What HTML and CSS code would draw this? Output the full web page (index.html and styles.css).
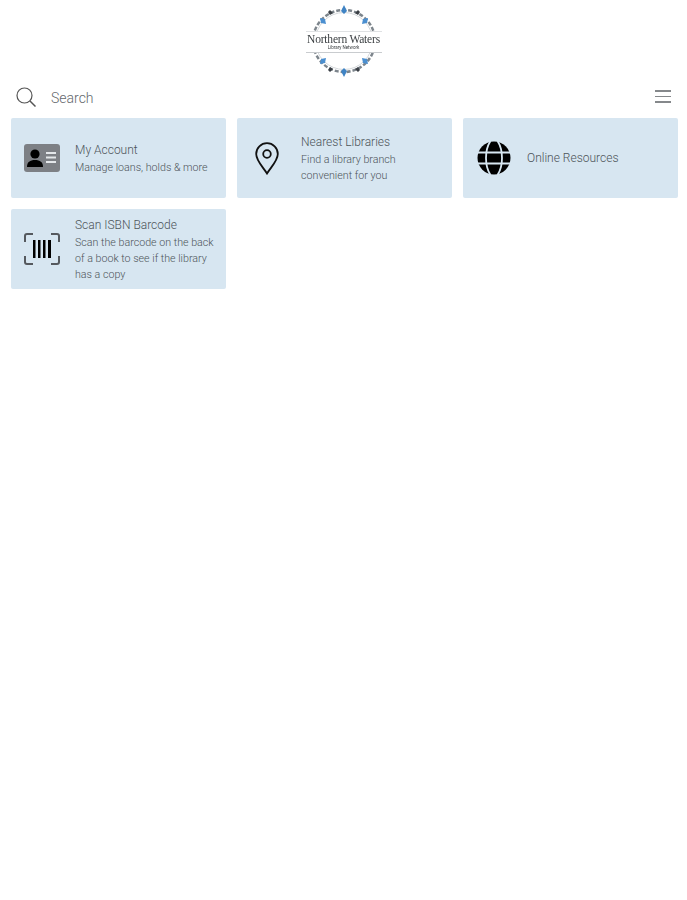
FILE: index.html
```html
<!DOCTYPE html>
<html lang="en">
<head>
    <meta charset="UTF-8">
    <meta name="viewport" content="width=device-width, initial-scale=1.0">
    <title>Northern Waters Library Network</title>
    <link rel="stylesheet" href="styles.css">
</head>
<body>
    <!-- Logo -->
    <header class="logo-bar">
        <div class="logo">
            <svg class="logo-ring" width="76" height="76" viewBox="0 0 76 76">
                <circle cx="38" cy="39" r="31" fill="none" stroke="#7d858c" stroke-width="2.500" stroke-dasharray="4 2"/>
                <circle cx="38" cy="39" r="28.500" fill="none" stroke="#d4d8db" stroke-width="1"/>
                <path d="M38 3l3 6-3 3-3-3zM38 75l3-6-3-3-3 3z" fill="#3f83c4"/>
                <path d="M14 16l5 1 1 5-5-1zM62 16l-5 1-1 5 5-1zM14 62l5-1 1-5-5 1zM62 62l-5-1-1-5 5 1z" fill="#4b8fd0"/>
                <path d="M24 8l3 3-3 2-2-3zM52 8l-3 3 3 2 2-3zM24 70l3-3-3-2-2 3zM52 70l-3-3 3-2 2 3z" fill="#3a3f45"/>
            </svg>
            <div class="logo-band">
                <div class="logo-name">Northern Waters</div>
                <div class="logo-sub">Library Network</div>
            </div>
        </div>
    </header>

    <!-- Search -->
    <div class="search-bar">
        <svg class="search-icon" width="20" height="20" viewBox="0 0 20 20">
            <circle cx="8.500" cy="8.500" r="7.500" fill="none" stroke="#555" stroke-width="1.200"/>
            <path d="M14 14l5.500 5.500" fill="none" stroke="#555" stroke-width="1.500"/>
        </svg>
        <span class="search-text">Search</span>
        <div class="menu-icon"><span></span><span></span><span></span></div>
    </div>

    <!-- Cards -->
    <main class="cards">
        <div class="card">
            <div class="card-icon">
                <svg width="36" height="28" viewBox="0 0 36 28">
                    <rect width="36" height="28" rx="3" fill="#7d8085"/>
                    <circle cx="11" cy="10" r="4.600" fill="#000"/>
                    <path d="M3 23c0-5 3-7 8-7s8 2 8 7z" fill="#000"/>
                    <path d="M22 8h10v2H22zM22 12.500h10v2H22zM22 17h10v2H22z" fill="#e4e7ea"/>
                </svg>
            </div>
            <div class="card-text">
                <div class="card-title">My Account</div>
                <div class="card-desc">Manage loans, holds &amp; more</div>
            </div>
        </div>

        <div class="card">
            <div class="card-icon card-icon-pin">
                <svg width="24" height="33" viewBox="0 0 24 33">
                    <path d="M12 31.500C7.500 24.500 1.200 18.500 1.200 12a10.800 10.800 0 0 1 21.600 0C22.800 18.500 16.500 24.500 12 31.500z" fill="none" stroke="#111" stroke-width="1.800"/>
                    <circle cx="12" cy="12" r="3.800" fill="none" stroke="#111" stroke-width="1.800"/>
                </svg>
            </div>
            <div class="card-text">
                <div class="card-title">Nearest Libraries</div>
                <div class="card-desc">Find a library branch convenient for you</div>
            </div>
        </div>

        <div class="card">
            <div class="card-icon">
                <svg width="34" height="34" viewBox="0 0 34 34">
                    <circle cx="17" cy="17" r="16.500" fill="#000"/>
                    <path d="M0 11.500h34M0 22.500h34" stroke="#d7e6f1" stroke-width="1.800"/>
                    <path d="M13.500 0C7.500 9 7.500 25 13.500 34M20.500 0c6 9 6 25 0 34" fill="none" stroke="#d7e6f1" stroke-width="1.800"/>
                </svg>
            </div>
            <div class="card-text">
                <div class="card-title">Online Resources</div>
            </div>
        </div>

        <div class="card">
            <div class="card-icon">
                <svg width="36" height="32" viewBox="0 0 36 32">
                    <path d="M1 9V3a2 2 0 0 1 2-2h6M27 1h6a2 2 0 0 1 2 2v6M35 23v6a2 2 0 0 1-2 2h-6M9 31H3a2 2 0 0 1-2-2v-6" fill="none" stroke="#55595e" stroke-width="2"/>
                    <path d="M9 7h2.500v18H9zM14 7h2.500v18H14zM19 7h2.500v18H19zM24 7h3v18h-3z" fill="#000"/>
                </svg>
            </div>
            <div class="card-text">
                <div class="card-title">Scan ISBN Barcode</div>
                <div class="card-desc">Scan the barcode on the back of a book to see if the library has a copy</div>
            </div>
        </div>
    </main>
</body>
</html>
```

FILE: styles.css
```css
* {
    margin: 0;
    padding: 0;
    box-sizing: border-box;
}

body {
    font-family: 'Roboto', 'Liberation Sans', sans-serif;
    background-color: #FFFFFF;
    color: #5b6368;
    overflow: hidden;
    height: 100vh;
}

/* Logo */
.logo-bar {
    display: flex;
    justify-content: center;
    padding-top: 2px;
    height: 79px;
}

.logo {
    position: relative;
    width: 76px;
    height: 76px;
    filter: blur(0.4px);
}

.logo-ring {
    display: block;
}

.logo-band {
    position: absolute;
    top: 29px;
    left: 0;
    width: 76px;
    padding: 1px 0 1px;
    background-color: #FFFFFF;
    border-top: 1px solid #dfe1e3;
    border-bottom: 1px solid #c9cccf;
    text-align: center;
    color: #3c4043;
    white-space: nowrap;
}

.logo-name {
    font-family: 'Liberation Serif', serif;
    font-size: 11.500px;
    line-height: 12px;
    letter-spacing: -0.2px;
}

.logo-sub {
    font-size: 4.500px;
    line-height: 6px;
}

/* Search */
.search-bar {
    display: flex;
    align-items: center;
    height: 39px;
    padding: 0 16px 4px 16px;
}

.search-icon {
    margin-right: 15px;
}

.search-text {
    flex: 1;
    font-size: 14px;
    font-weight: 300;
    color: #64696d;
    padding-top: 3px;
}

.menu-icon {
    display: flex;
    flex-direction: column;
    gap: 4px;
    width: 16px;
}

.menu-icon span {
    height: 1.500px;
    background-color: #85888b;
}

/* Cards */
.cards {
    display: grid;
    grid-template-columns: repeat(3, 215px);
    grid-auto-rows: 80px;
    gap: 11px;
    padding-left: 11px;
}

.card {
    display: flex;
    align-items: center;
    background-color: #d7e6f1;
    border-radius: 2px;
}

.card-icon {
    display: flex;
    justify-content: center;
    flex: none;
    width: 64px;
    padding-right: 3px;
}

.card-icon-pin {
    padding-right: 5px;
}

.card-text {
    padding: 2px 8px 0 0;
}

.card-title {
    font-size: 12px;
    font-weight: 300;
    line-height: 16px;
    margin-bottom: 2px;
    color: #4d5459;
}

.card-desc {
    font-size: 10.700px;
    font-weight: 300;
    line-height: 16px;
    color: #4d5459;
}
```
